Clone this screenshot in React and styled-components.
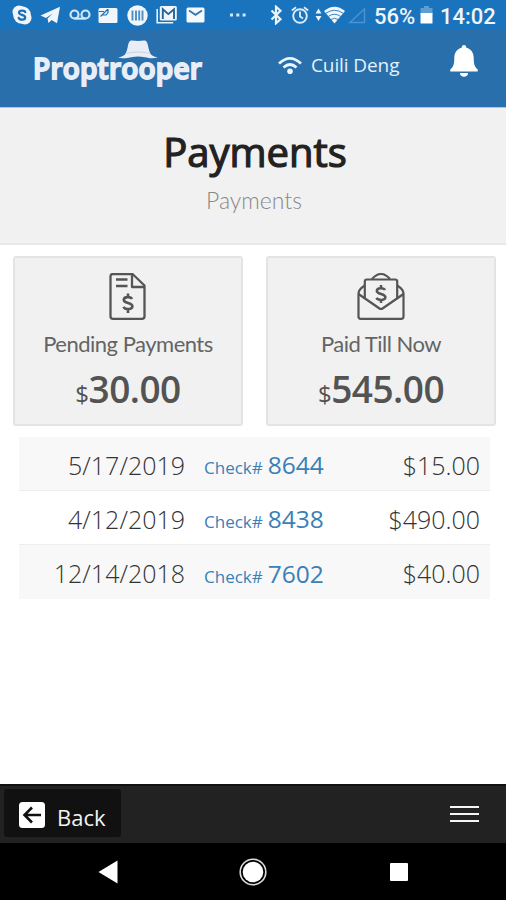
import React from 'react'
import styled, { createGlobalStyle } from 'styled-components'

const payments = [
    { date: '5/17/2019', check: '8644', amount: '$15.00' },
    { date: '4/12/2019', check: '8438', amount: '$490.00' },
    { date: '12/14/2018', check: '7602', amount: '$40.00' },
]

function StatusIcons() {
    return (
        <>
            <Icon width="20" height="20" viewBox="0 0 20 20" $left={12}>
                <circle cx="7" cy="7" r="6.5" fill="#f0f6fb" />
                <circle cx="13" cy="13" r="6.5" fill="#f0f6fb" />
                <circle cx="10" cy="10" r="8.8" fill="#f0f6fb" />
                <path d="M13.3 7.2C12.6 5.2 7.2 5 7 7.6c-.1 2.8 6.2 1.8 6.2 4.8 0 2.9-5.6 2.9-6.5.4" fill="none" stroke="#1c6fb5" strokeWidth="2.2" strokeLinecap="round" />
            </Icon>
            <Icon width="21" height="18" viewBox="0 0 21 18" $left={8}>
                <path d="M.5 9.5 20 .8 17 17.3 11.5 14 8.5 17 7.5 12.5 12.5 7.500 6 12Z" fill="#f0f6fb" />
            </Icon>
            <Icon width="22" height="12" viewBox="0 0 22 12" $left={8}>
                <g fill="none" stroke="#d3e6f4" strokeWidth="2.2">
                    <circle cx="5.5" cy="5.5" r="4" />
                    <circle cx="16.5" cy="5.5" r="4" />
                    <path d="M5.5 9.6h11" />
                </g>
            </Icon>
            <Icon width="20" height="17" viewBox="0 0 20 17" $left={7}>
                <rect x=".5" y="1" width="19" height="15" rx="1.5" fill="#f0f6fb" />
                <path d="M1 4.500h5M2.500 9.500 9.500 2.500M4 8h4l2-2.500V2" fill="none" stroke="#1c6fb5" strokeWidth="1.2" />
            </Icon>
            <Icon width="21" height="21" viewBox="0 0 21 21" $left={9}>
                <circle cx="10.5" cy="10.5" r="10.2" fill="#f0f6fb" />
                <path d="M5.500 5.5v10M9 5.5v10M12.200 5.5v10M15.500 5.5v10" stroke="#4e8dc2" strokeWidth="1.9" />
            </Icon>
            <Icon width="21" height="18" viewBox="0 0 21 18" $left={8}>
                <path d="M1.2 3v13.8h16" fill="none" stroke="#e8f2fa" strokeWidth="1.6" />
                <rect x="3.8" y="0" width="17" height="14.5" rx="1.5" fill="#f0f6fb" />
                <path d="M6.8 13V3.200l5.500 4.900L18 3.200V13" fill="none" stroke="#286395" strokeWidth="1.9" />
            </Icon>
            <Icon width="19" height="16" viewBox="0 0 19 16" $left={9}>
                <rect x=".5" y=".5" width="18" height="15" rx="1.5" fill="#f5f9fc" />
                <path d="m3 3.5 6.500 4.300L16 3.5" fill="none" stroke="#3477af" strokeWidth="1.8" />
            </Icon>
            <Icon width="18" height="6" viewBox="0 0 18 6" $left={24}>
                <path d="M1 1.500h3v3H1zM7.300 1.500h3v3h-3zM13.600 1.500h3v3h-3z" fill="#d6e8f5" />
            </Icon>
            <Icon width="13" height="20" viewBox="0 0 13 20" $left={23}>
                <path d="m1.500 5.5 9 8.8-4.500 4V1.700l4.500 4-9 8.800" fill="none" stroke="#e8f3fb" strokeWidth="2.200" />
            </Icon>
            <Icon width="18" height="19" viewBox="0 0 18 19" $left={8}>
                <g fill="none" stroke="#dcebf7" strokeWidth="1.9">
                    <circle cx="9" cy="10" r="6.800" />
                    <path d="M9 5.500v5l3 2M.8 4.500 5 1.300M17.200 4.500l-4.200-3.200" />
                </g>
            </Icon>
            <Icon width="7" height="16" viewBox="0 0 7 16" $left={6}>
                <path d="m3.500 1.500 3 5h-6zM3.500 14l3-5h-6z" fill="#e8f3fb" />
            </Icon>
            <Icon width="21" height="18" viewBox="0 0 21 18" $left={2}>
                <path d="M0 5Q10.500-3.500 21 5L10.500 17.500Z" fill="#f0f6fb" />
                <path d="M1.500 7.500q9-6.500 18 0M4.200 10.500q6.300-4.500 12.600 0M7 13.500q3.500-2.400 7 0" fill="none" stroke="#3b82be" strokeWidth="1" />
            </Icon>
            <Icon width="18" height="17" viewBox="0 0 18 17" $left={3}>
                <path d="M1.800 15.500h14.700V2z" fill="none" stroke="#4a93d0" strokeWidth="1.500" />
            </Icon>
        </>
    )
}

function App() {
    return (
        <Screen>
            <GlobalStyle />
            <StatusBar>
                <StatusIcons />
                <Percent>56%</Percent>
                <Icon width="13" height="18" viewBox="0 0 13 18" $left={4}>
                    <path d="M4 0h5v2h3.500v6H.5V2H4z" fill="#5c9ed4" />
                    <path d="M.5 7h12v10.500H.5z" fill="#fff" />
                </Icon>
                <Clock>14:02</Clock>
            </StatusBar>

            <Header>
                <Logo>
                    Proptrooper
                    <Hat width="40" height="20" viewBox="0 0 40 20">
                        <path d="M0 17C6 17 8 14.500 9.500 8 10.500 2 11.500.5 14 .5c2 0 4 .6 6 .6s4-.6 6-.6c2.500 0 3.500 1.500 4.500 7.500C32 14.500 34 17 40 17c-4 2-9 1-13 .2-5-1-9-1-14 0C8 18.200 4 19 0 17Z" fill="#e9eef6" />
                        <path d="M8.500 13.500c7-2 16-2 23 0" fill="none" stroke="#c3d3e6" strokeWidth="1" />
                    </Hat>
                </Logo>
                <User>
                    <svg width="24" height="19" viewBox="0 0 24 19">
                        <g fill="none" stroke="#e9f6fc" strokeWidth="2.8">
                            <path d="M1 7.500Q12-2.800 23 7.500" />
                            <path d="M5.500 11.500q6.500-6 13 0" />
                        </g>
                        <circle cx="12" cy="15.300" r="2.800" fill="#e9f6fc" />
                    </svg>
                    <UserName>Cuili Deng</UserName>
                </User>
                <Bell width="28" height="33" viewBox="0 0 28 33">
                    <path d="M14 0c1.500 0 2.300 1 2.300 2.700C21.500 4 23.700 8 23.700 13c0 7 1.300 9 4 11.500V26.500H.3v-2C3 22 4.300 20 4.300 13c0-5 2.200-9 7.400-10.300C11.700 1 12.500 0 14 0ZM10 28h8c0 2.500-1.700 3.800-4 3.800s-4-1.300-4-3.800Z" fill="#fff" />
                </Bell>
            </Header>

            <Heading>
                <Title>Payments</Title>
                <Breadcrumb>Payments</Breadcrumb>
            </Heading>

            <Cards>
                <Card>
                    <svg width="48" height="48" viewBox="0 0 48 48">
                        <g fill="none" stroke="#555" strokeWidth="2.300" strokeLinejoin="round">
                            <path d="M9 1h19.500L40.500 12.500v31q0 2.300-2.500 2.300H9q-2.500 0-2.500-2.300V3.300Q6.500 1 9 1Z" />
                            <path d="M28 1v13h12.500M12 6.500h11.500M12 13h11.500" />
                            <path d="M28 26c-1.200-2.500-8-2.700-8.200.8-.2 4 8.800 2.400 8.600 6.500-.2 3.700-7.200 3.600-9 .6M24 20.500V24M24 36v4" strokeWidth="2.600" />
                        </g>
                    </svg>
                    <CardLabel>Pending Payments</CardLabel>
                    <Amount><Currency>$</Currency>30.00</Amount>
                </Card>
                <Card>
                    <svg width="48" height="48" viewBox="0 0 48 48">
                        <g fill="none" stroke="#555" strokeWidth="2.200" strokeLinejoin="round">
                            <path d="M7.800 26V8.500q0-2 2-2h28.400q2 0 2 2V26" />
                            <path d="M1.500 21 22.500 35.500q1.500 1 3 0L46.500 21" />
                            <path d="M15 6q9-10 18 0M7.800 12.500Q1.500 16.500 1.500 20.500v23q0 2.300 2.300 2.300h40.400q2.300 0 2.300-2.300v-23q0-4-6.300-8" />
                            <path d="M28 17c-1.200-2.500-8-2.700-8.200.8-.2 4 8.800 2.400 8.600 6.500-.2 3.500-7.200 3.400-9 .6M24 12v3.500M24 26.500v3.500" strokeWidth="2.500" />
                        </g>
                    </svg>
                    <CardLabel>Paid Till Now</CardLabel>
                    <Amount><Currency>$</Currency>545.00</Amount>
                </Card>
            </Cards>

            <List>
                {payments.map((payment) => (
                    <Row key={payment.check}>
                        <DateCell>{payment.date}</DateCell>
                        <CheckLink><small>Check#</small>{payment.check}</CheckLink>
                        <Total>{payment.amount}</Total>
                    </Row>
                ))}
            </List>

            <Footer>
                <BackButton>
                    <svg width="26" height="26" viewBox="0 0 26 26">
                        <rect width="26" height="26" rx="3.500" fill="#fff" />
                        <path d="M22 13H6M13 5.500 5.500 13l7.500 7.500" fill="none" stroke="#111" strokeWidth="2.600" />
                    </svg>
                    <span>Back</span>
                </BackButton>
                <Menu>
                    <i /><i /><i />
                </Menu>
            </Footer>

            <NavBar>
                <svg width="20" height="24" viewBox="0 0 20 24">
                    <path d="M19.500.5v23L.5 12z" fill="#fff" />
                </svg>
                <svg width="28" height="28" viewBox="0 0 28 28">
                    <circle cx="14" cy="14" r="12.800" fill="none" stroke="#ddd" strokeWidth="1.600" />
                    <circle cx="14" cy="14" r="10.300" fill="#fff" />
                </svg>
                <svg width="18" height="18" viewBox="0 0 18 18">
                    <rect width="18" height="18" rx="1" fill="#fff" />
                </svg>
            </NavBar>
        </Screen>
    )
}

export default App

const GlobalStyle = createGlobalStyle`
    * {
        box-sizing: border-box;
    }
    body {
        margin: 0;
        background: #fff;
    }
`
const Screen = styled.div`
    width: 506px;
    height: 900px;
    display: flex;
    flex-direction: column;
    overflow: hidden;
    font-family: "Open Sans", sans-serif;
    color: #555;
`
const StatusBar = styled.div`
    height: 29px;
    flex-shrink: 0;
    display: flex;
    align-items: center;
    padding-top: 1px;
    background: #1a73bd;
    color: #eef6fc;
    font-family: Roboto, sans-serif;
    font-size: 22px;
    font-weight: 500;
    white-space: nowrap;
`
const Icon = styled.svg`
    flex-shrink: 0;
    margin-left: ${(props) => props.$left}px;
`
const Percent = styled.span`
    width: 42px;
    margin-left: 8px;
    padding-top: 2px;
`
const Clock = styled.span`
    margin-left: 7px;
    padding-top: 2px;
`
const Header = styled.div`
    height: 79px;
    flex-shrink: 0;
    display: flex;
    align-items: flex-start;
    background: #286fac;
    border-bottom: 1px solid #a9c7df;
`
const Logo = styled.div`
    position: relative;
    width: 175px;
    margin: 20px 0 0 33px;
    font-size: 28px;
    line-height: 38px;
    font-weight: 600;
    letter-spacing: 0.2px;
    color: #e9eef6;
    -webkit-text-stroke: 1.8px #e9eef6;
    stroke-linejoin: round;
`
const Hat = styled.svg`
    position: absolute;
    left: 85px;
    top: -9px;
`
const User = styled.div`
    display: flex;
    align-items: center;
    width: 172px;
    height: 26px;
    margin: 23px 0 0 70px;
    color: #e3f2fb;
    font-size: 19px;
    letter-spacing: -0.1px;
    white-space: nowrap;
`
const UserName = styled.span`
    margin-left: 9px;
`
const Bell = styled.svg`
    margin-top: 16px;
`
const Heading = styled.div`
    height: 137px;
    flex-shrink: 0;
    padding-top: 16px;
    background: #f1f1f1;
    border-bottom: 2px solid #e8e8e8;
    text-align: center;
`
const Title = styled.h1`
    margin: 0 0 0 4px;
    font-size: 40px;
    line-height: 56px;
    font-weight: 400;
    color: #222;
    -webkit-text-stroke: 1.2px #222;
`
const Breadcrumb = styled.div`
    margin: 6px 0 0 2px;
    font-family: Lato, sans-serif;
    font-size: 23px;
    line-height: 28px;
    font-weight: 300;
    color: #888;
`
const Cards = styled.div`
    display: grid;
    grid-template-columns: 230px 230px;
    gap: 23px;
    padding: 11px 0 0 13px;
`
const Card = styled.div`
    height: 170px;
    display: flex;
    flex-direction: column;
    align-items: center;
    padding-top: 15px;
    background: #f1f1f1;
    border: 2px solid #e4e4e4;
    border-radius: 3px;
`
const CardLabel = styled.div`
    margin-top: 9px;
    font-family: Lato, sans-serif;
    font-size: 22px;
    line-height: 28px;
    letter-spacing: -0.5px;
    color: #646464;
`
const Amount = styled.div`
    margin-top: 8px;
    font-size: 37px;
    line-height: 46px;
    font-weight: 600;
    letter-spacing: -0.5px;
    color: #535353;
`
const Currency = styled.span`
    font-size: 24px;
    font-weight: 400;
`
const List = styled.div`
    margin: 11px 16px 0 19px;
    font-size: 25px;
    color: #333;
`
const Row = styled.div`
    display: grid;
    grid-template-columns: 166px 140px 1fr;
    column-gap: 19px;
    align-items: center;
    height: 54px;
    padding: 2px 10px 0 0;
    border-bottom: 1px solid #ededed;

    &:nth-child(odd) {
        background: #f8f8f8;
    }
    &:last-child {
        border-bottom: none;
    }
`
const DateCell = styled.div`
    text-align: right;
    font-weight: 300;
`
const CheckLink = styled.div`
    color: #3a80b6;
    font-size: 24.5px;
    white-space: nowrap;

    small {
        margin-right: 5px;
        font-size: 17px;
    }
`
const Total = styled.div`
    text-align: right;
    font-weight: 300;
`
const Footer = styled.div`
    height: 59px;
    flex-shrink: 0;
    display: flex;
    align-items: flex-start;
    justify-content: space-between;
    margin-top: auto;
    padding: 3px 27px 0 4px;
    background: #222;
    border-top: 2px solid #111;
`
const BackButton = styled.div`
    width: 117px;
    height: 48px;
    display: flex;
    align-items: center;
    padding: 4px 0 0 15px;
    background: #111;
    border-radius: 3px;
    color: #f3f3f3;
    font-size: 22px;

    span {
        margin: 4px 0 0 12px;
    }
`
const Menu = styled.div`
    width: 29px;
    display: flex;
    flex-direction: column;
    gap: 5px;
    margin-top: 17px;

    i {
        height: 2px;
        background: #f4f4f4;
    }
`
const NavBar = styled.div`
    height: 57px;
    flex-shrink: 0;
    display: flex;
    align-items: center;
    gap: 121px;
    padding-left: 98px;
    background: #000;

    svg:last-child {
        margin-left: 2px;
    }
`
